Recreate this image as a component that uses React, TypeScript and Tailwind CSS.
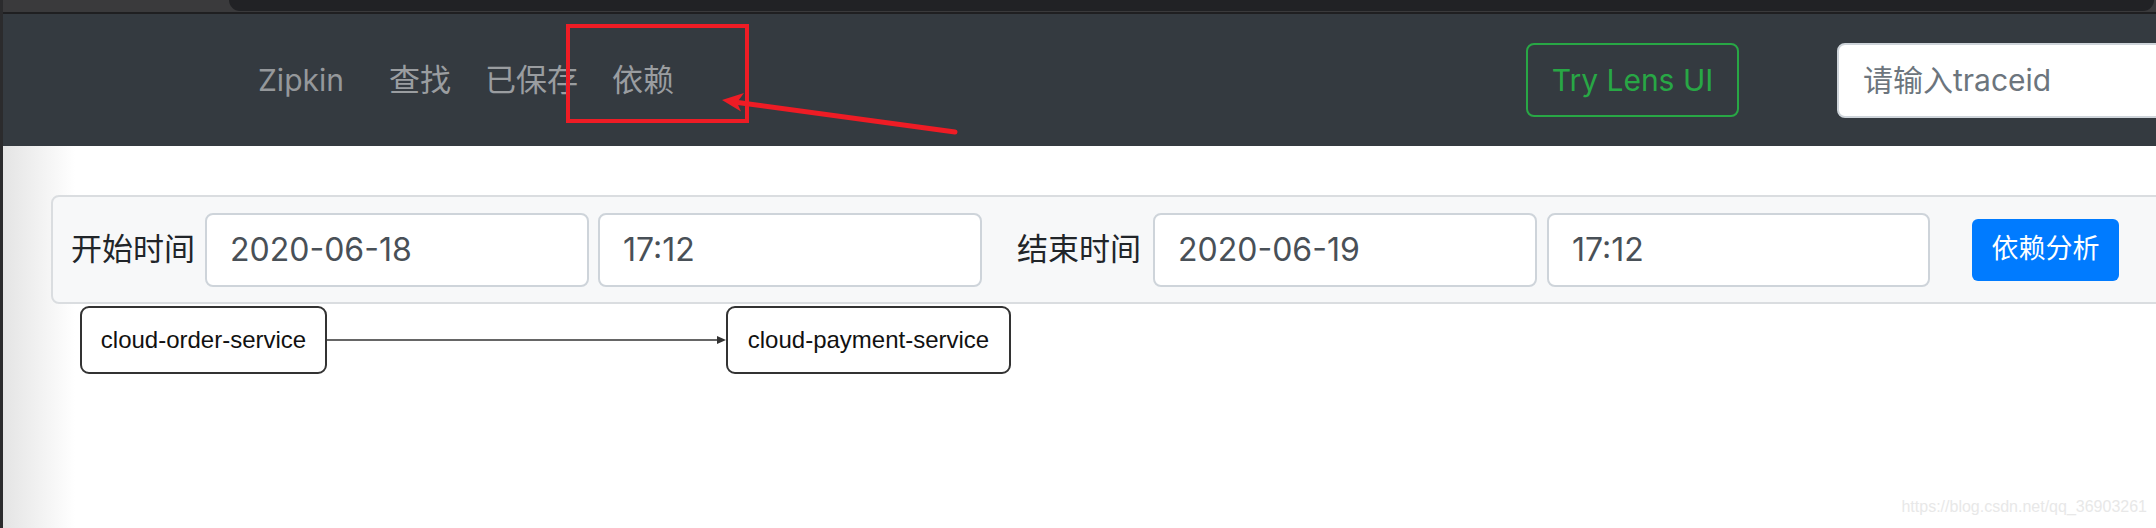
import React from "react";

const FIELD =
  "h-[74px] shrink-0 flex items-center bg-white border-2 border-[#ced4da] rounded-[8px] pl-[23px] text-[32px] text-[#495057]";

function Field({ value, width }: { value: string; width: string }) {
  return <div className={`${FIELD} ${width}`}>{value}</div>;
}

function Annotation() {
  // red markup drawn on top of the screenshot
  return (
    <svg
      className="absolute inset-0 pointer-events-none"
      width="2156"
      height="528"
      viewBox="0 0 2156 528"
    >
      <rect x="568" y="26" width="179" height="95" fill="none" stroke="#ee1c25" strokeWidth="4" />
      <line x1="955" y1="132" x2="734" y2="102" stroke="#ee1c25" strokeWidth="5" strokeLinecap="round" />
      <polygon points="722,100 744,93 737,102.5 741,111.5" fill="#ee1c25" />
    </svg>
  );
}

export default function App() {
  return (
    <div className="relative flex w-[2156px] h-[528px] overflow-hidden bg-white font-['Inter','Noto_Sans_CJK_SC',sans-serif]">
      <div className="w-[3px] shrink-0 bg-[#2b2b2d]" />

      <div className="flex flex-col flex-1 min-w-0">
        {/* browser chrome */}
        <div className="h-[12px] bg-[#3a3a3c] flex">
          <div className="ml-[226px] mr-[2px] flex-1 h-[11px] bg-[#212225] rounded-b-[12px]" />
        </div>
        <div className="h-[2px] bg-[#1f1f21]" />

        <nav className="h-[132px] bg-[#343a40] flex items-center overflow-hidden">
          <div className="w-[1523px] shrink-0 flex items-center pl-[255px]">
            <span className="w-[131px] text-[30px] text-[#95989b]">Zipkin</span>
            <div className="flex gap-[34px] text-[31px] text-[#9a9da0]">
              <a>查找</a>
              <a>已保存</a>
              <a>依赖</a>
            </div>
          </div>
          <button className="w-[213px] h-[74px] shrink-0 border-2 border-[#28a745] rounded-[8px] text-[#28a745] text-[30px]">
            Try Lens UI
          </button>
          <div className="ml-[98px] w-[360px] h-[75px] shrink-0 flex items-center bg-white border-2 border-[#ced4da] rounded-l-[8px] pl-[24px] text-[30px] text-[#6c757d]">
            请输入traceid
          </div>
        </nav>

        <div className="flex-1 pt-[49px] bg-[linear-gradient(to_right,#e4e4e4,#ffffff_72px)]">
          <div className="ml-[48px] w-[2150px] h-[109px] flex items-center pl-[18px] bg-[#f7f8f9] border-2 border-[#dadde0] rounded-[8px]">
            <span className="mr-[10px] text-[31px] text-[#212529]">开始时间</span>
            <Field value="2020-06-18" width="w-[384px]" />
            <div className="w-[9px] shrink-0" />
            <Field value="17:12" width="w-[384px]" />
            <span className="ml-[35px] mr-[12px] text-[31px] text-[#212529]">结束时间</span>
            <Field value="2020-06-19" width="w-[384px]" />
            <div className="w-[10px] shrink-0" />
            <Field value="17:12" width="w-[383px]" />
            <button className="ml-[42px] w-[147px] h-[62px] shrink-0 bg-[#007bff] rounded-[6px] text-white text-[27px]">
              依赖分析
            </button>
          </div>

          {/* dependency graph */}
          <div className="relative h-[180px] font-['Liberation_Sans',Arial,sans-serif] text-[24px] text-[#111]">
            <svg className="absolute left-0 top-0" width="1100" height="120">
              <line x1="324" y1="36" x2="716" y2="36" stroke="#333" strokeWidth="1.5" />
              <polygon points="723,36 714,32 714,40" fill="#333" />
            </svg>
            <div className="absolute left-[77px] top-[2px] w-[247px] h-[68px] flex items-center justify-center bg-white border-2 border-[#333] rounded-[9px]">
              cloud-order-service
            </div>
            <div className="absolute left-[723px] top-[2px] w-[285px] h-[68px] flex items-center justify-center bg-white border-2 border-[#333] rounded-[9px]">
              cloud-payment-service
            </div>
          </div>
        </div>
      </div>

      <span className="absolute right-[9px] bottom-[9px] font-['Liberation_Sans',Arial,sans-serif] text-[16px] text-[#e8e8e8]">
        https://blog.csdn.net/qq_36903261
      </span>
      <Annotation />
    </div>
  );
}
